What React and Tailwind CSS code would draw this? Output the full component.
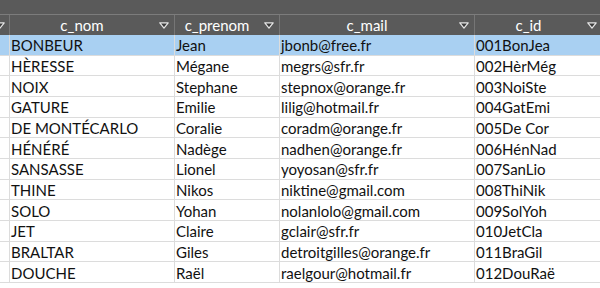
import React from "react";

const rows = [
  ["BONBEUR", "Jean", "jbonb@free.fr", "001BonJea"],
  ["HÈRESSE", "Mégane", "megrs@sfr.fr", "002HèrMég"],
  ["NOIX", "Stephane", "stepnox@orange.fr", "003NoiSte"],
  ["GATURE", "Emilie", "lilig@hotmail.fr", "004GatEmi"],
  ["DE MONTÉCARLO", "Coralie", "coradm@orange.fr", "005De Cor"],
  ["HÉNÉRÉ", "Nadège", "nadhen@orange.fr", "006HénNad"],
  ["SANSASSE", "Lionel", "yoyosan@sfr.fr", "007SanLio"],
  ["THINE", "Nikos", "niktine@gmail.com", "008ThiNik"],
  ["SOLO", "Yohan", "nolanlolo@gmail.com", "009SolYoh"],
  ["JET", "Claire", "gclair@sfr.fr", "010JetCla"],
  ["BRALTAR", "Giles", "detroitgilles@orange.fr", "011BraGil"],
  ["DOUCHE", "Raël", "raelgour@hotmail.fr", "012DouRaë"],
];

function Arrow() {
  return (
    <svg width="10" height="7" viewBox="0 0 10 7" className="shrink-0">
      <polygon points="0.8,0.8 9.2,0.8 5,6.2" fill="#3c3c3c" stroke="#e6e6e6" strokeWidth="1.2" strokeLinejoin="round" />
    </svg>
  );
}

function HeaderCell({ label, w, last }) {
  return (
    <div className={`flex h-full items-center shrink-0 ${last ? "" : "border-r border-[#767676]"} ${w}`}>
      <div className="flex-1 text-center text-white pt-[1px]">{label}</div>
      <div className="w-[20px] flex justify-end pr-[5px]">
        <Arrow />
      </div>
    </div>
  );
}

export default function App() {
  return (
    <div
      className="w-[600px] h-[288px] overflow-hidden bg-white text-[15px] leading-none"
      style={{ fontFamily: "Lato, 'Liberation Sans', sans-serif" }}
    >
      <div className="h-[14px] bg-[#5a5a5a]" />
      <div className="h-[1px] bg-[#7c7c7c]" />
      <div className="flex h-[20px] bg-[#5a5a5a] w-[610px]">
        <div className="w-[10px] shrink-0 h-full flex items-center justify-end overflow-hidden border-r border-[#767676]">
          <div className="mr-[4px] flex shrink-0">
            <Arrow />
          </div>
        </div>
        <HeaderCell label="c_nom" w="w-[165px]" />
        <HeaderCell label="c_prenom" w="w-[105px]" />
        <HeaderCell label="c_mail" w="w-[195px]" />
        <HeaderCell label="c_id" w="w-[127px]" last />
      </div>
      {rows.map((r, i) => (
        <div
          key={i}
          className={`flex h-[20.67px] w-[610px] border-b border-[#dcdcdc] text-[#111] ${i === 0 ? "bg-[#a9d0f2]" : "bg-white"}`}
        >
          <div className="w-[10px] shrink-0 border-r border-[#dcdcdc]" />
          <div className="w-[165px] shrink-0 border-r border-[#dcdcdc] flex items-center pl-[1px] pt-[2px]">{r[0]}</div>
          <div className="w-[105px] shrink-0 border-r border-[#dcdcdc] flex items-center pl-[1px] pt-[2px]">{r[1]}</div>
          <div className="w-[195px] shrink-0 border-r border-[#dcdcdc] flex items-center pl-[1px] pt-[2px]">{r[2]}</div>
          <div className="w-[127px] shrink-0 flex items-center pl-[1px] pt-[2px]">{r[3]}</div>
        </div>
      ))}
    </div>
  );
}
